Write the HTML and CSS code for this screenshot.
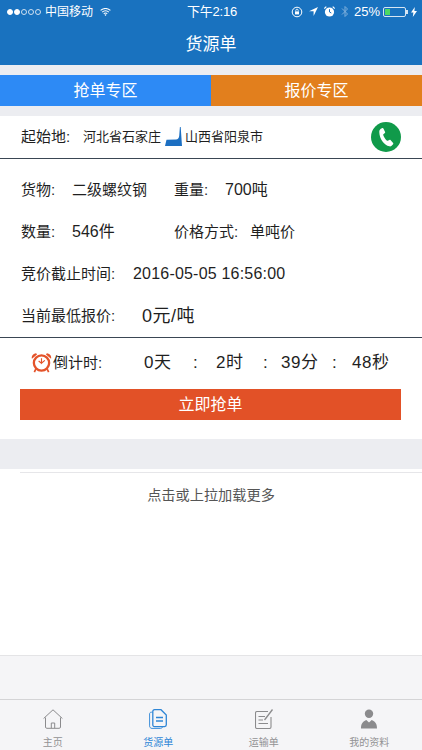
FILE: index.html
```html
<!DOCTYPE html>
<html lang="zh-CN">
<head>
<meta charset="utf-8">
<title>货源单</title>
<link rel="stylesheet" href="styles.css">
</head>
<body>
<div class="app">
  <header class="header">
    <div class="status">
      <div class="status-left">
        <span class="signal"><i class="dot on"></i><i class="dot on"></i><i class="dot"></i><i class="dot"></i><i class="dot"></i></span>
        <span class="carrier">中国移动</span>
        <svg class="wifi" width="11" height="8" viewBox="0 0 12 9"><path d="M.5 2.800a7.800 7.800 0 0 1 11 0M2.300 4.700a5.200 5.200 0 0 1 7.400 0M4 6.400a2.800 2.800 0 0 1 4 0" fill="none" stroke="#fff" stroke-width="1.200"/><path d="M6 9 4.800 7.600a1.700 1.700 0 0 1 2.400 0z" fill="#fff"/></svg>
      </div>
      <div class="time">下午2:16</div>
      <div class="status-right">
        <svg width="12" height="12" viewBox="0 0 12 12"><circle cx="6" cy="6" r="4.800" fill="none" stroke="#fff" stroke-width="1"/><rect x="4" y="5.400" width="4" height="3" fill="#fff"/><path d="M4.800 5.400V4.400a1.200 1.200 0 0 1 2.400 0v1" fill="none" stroke="#fff" stroke-width=".8"/></svg>
        <svg class="gap-a" width="9" height="9" viewBox="0 0 9 9"><path d="M9 0 0 4.200h4.600V9z" fill="#fff"/></svg>
        <svg class="gap-a" width="11" height="11" viewBox="0 0 11 11"><circle cx="5.500" cy="6" r="4.600" fill="#fff"/><path d="M5.500 3.200V6l1.800 1" fill="none" stroke="#1972bf" stroke-width="1"/><path d="M.3 2.500 2.300.6M10.700 2.500 8.700.6" stroke="#fff" stroke-width="1.200"/></svg>
        <svg class="gap-b" width="8" height="13" viewBox="0 0 8 13"><path d="M1 3.500 6.500 9 4 11.500v-10L6.500 4 1 9.500" fill="none" stroke="#7fb0dc" stroke-width="1"/></svg>
        <span class="percent">25%</span>
        <span class="battery"><span class="battery-fill"></span></span>
        <span class="battery-nub"></span>
        <svg class="bolt" width="6" height="10" viewBox="0 0 6 10"><path d="M3.800 0 0 5.600h2.400L1.800 10 6 3.900H3.400z" fill="#fff"/></svg>
      </div>
    </div>
    <h1 class="title">货源单</h1>
  </header>

  <nav class="zones">
    <div class="zone zone-blue">抢单专区</div>
    <div class="zone zone-orange">报价专区</div>
  </nav>

  <main class="card">
    <div class="route">
      <span class="route-label">起始地:</span>
      <span class="route-place">河北省石家庄</span>
      <svg class="route-icon" width="17" height="19" viewBox="0 0 17 19"><path d="M0 19 1.500 12.800 11 12.400C13 12.300 13.800 11.500 14.200 9L14.900 0H15.700L17 19z" fill="#1c6fc2"/></svg>
      <span class="route-place">山西省阳泉市</span>
      <svg class="phone" width="30" height="30" viewBox="0 0 30 30"><circle cx="15" cy="15" r="15" fill="#109a4a"/><path d="M9.400 6.900 11.300 6c.5-.2.900 0 1.100.4l1.700 3.600c.2.400.1.800-.2 1.100l-1.500 1.200c-.2.200-.3.400-.2.700.7 2.200 2 4.200 3.800 5.700.2.200.5.200.7.1l1.700-.9c.4-.2.800-.1 1.100.2l2.600 3c.3.300.3.800 0 1.100l-1.500 1.500c-.6.600-1.400.8-2.200.6-5.500-1.500-10-7.600-10.100-14.400 0-.9.400-2.200 1.100-2.600z" fill="#fff"/></svg>
    </div>

    <div class="details">
      <div class="line">
        <div class="cell cell-first"><span class="label">货物:</span><span class="value">二级螺纹钢</span></div>
        <div class="cell"><span class="label">重量:</span><span class="value num">700吨</span></div>
      </div>
      <div class="line">
        <div class="cell cell-first"><span class="label">数量:</span><span class="value num">546件</span></div>
        <div class="cell"><span class="label label-tight">价格方式:</span><span class="value">单吨价</span></div>
      </div>
      <div class="line">
        <span class="label label-wide">竞价截止时间:</span><span class="value num date">2016-05-05 16:56:00</span>
      </div>
      <div class="line">
        <span class="label label-wider">当前最低报价:</span><span class="price">0元/吨</span>
      </div>
    </div>

    <div class="countdown">
      <svg class="clock" width="21" height="21" viewBox="0 0 22 22">
        <path d="M1 7.200C.2 4.500 2 1.500 5.400 1.200L6.300 2.700zM21 7.200C21.800 4.500 20 1.500 16.600 1.200L15.700 2.700z" fill="#e4532a"/>
        <circle cx="11" cy="11.500" r="8" fill="#fff" stroke="#e4532a" stroke-width="2.400"/>
        <path d="M11 6.500V11.800L14.500 8.800M11 11.800 8 9.500" fill="none" stroke="#e4532a" stroke-width="1.200"/>
        <path d="M5 18 3.500 21M17 18 18.500 21" stroke="#e4532a" stroke-width="1.800"/>
      </svg>
      <span class="count-label">倒计时:</span>
      <span class="count-val">0天</span><span class="count-sep">:</span>
      <span class="count-val">2时</span><span class="count-sep">:</span>
      <span class="count-val">39分</span><span class="count-sep">:</span>
      <span class="count-val">48秒</span>
    </div>

    <div class="action"><button class="grab">立即抢单</button></div>
  </main>

  <div class="divider"></div>

  <section class="more">
    <div class="more-text">点击或上拉加载更多</div>
  </section>

  <div class="band"></div>

  <footer class="tabs">
    <div class="tab">
      <svg width="20" height="20" viewBox="0 0 20 20"><path d="M.6 9.500 10 .8l9.400 8.700M2.500 8.500v9.500c0 .8.500 1.300 1.300 1.300h12.400c.8 0 1.300-.5 1.300-1.300V8.500M8.300 19.200v-5.200h3.400v5.200" fill="none" stroke="#8b8b8d" stroke-width="1"/></svg>
      <span>主页</span>
    </div>
    <div class="tab tab-on">
      <svg width="18" height="20" viewBox="0 0 18 20"><path d="M3.500 3.200H2.300C1.200 3.200.6 3.900.6 5v11.900c0 1.400.9 2.500 2.400 2.500h8.600c1.100 0 1.700-.6 1.700-1.400" fill="none" stroke="#3d8fd9" stroke-width="1"/><path d="M5.500.7H12l5.300 5.300v9.800c0 1.100-.7 1.800-1.700 1.800H5.500c-1 0-1.700-.7-1.700-1.800V2.500C3.800 1.400 4.500.7 5.500.7z" fill="none" stroke="#2f86d6" stroke-width="1.300"/><path d="M7 8.500h7M7 12h7" stroke="#2f86d6" stroke-width="1.300"/></svg>
      <span>货源单</span>
    </div>
    <div class="tab">
      <svg width="18" height="20" viewBox="0 0 18 20"><path d="M13 2.500H2C1 2.500.5 3 .5 4v14c0 1 .5 1.500 1.500 1.500h12.500c1 0 1.500-.5 1.500-1.500V8" fill="none" stroke="#8b8b8d" stroke-width="1.100"/><path d="M3.500 7.500H10M3.500 11H8M3.500 14.500H13" stroke="#8b8b8d" stroke-width="1.100"/><path d="M9.500 11 17.500.5" stroke="#8b8b8d" stroke-width="1.300"/></svg>
      <span>运输单</span>
    </div>
    <div class="tab">
      <svg width="16" height="20" viewBox="0 0 16 20"><circle cx="8" cy="4.700" r="4.200" fill="#8b8b8d"/><path d="M0 19.500c0-4 1-6.500 5.300-8.500L8 13.500 10.700 11C15 13 16 15.500 16 19.500z" fill="#8b8b8d"/></svg>
      <span>我的资料</span>
    </div>
  </footer>
</div>
</body>
</html>
```

FILE: styles.css
```css
* { box-sizing: border-box; }
html, body { margin: 0; padding: 0; }
body {
  width: 422px;
  height: 750px;
  overflow: hidden;
  background: #ecedf1;
  font-family: "Liberation Sans", "Noto Sans CJK SC", sans-serif;
  color: #1f1f1f;
}
.app { display: flex; flex-direction: column; height: 750px; }

.header { height: 65px; background: #1972bf; color: #fff; flex: none; }
.status {
  height: 21px;
  display: grid;
  grid-template-columns: 1fr auto 1fr;
  align-items: center;
  padding: 2px 5px 0 7px;
  font-size: 12px;
  line-height: 16px;
}
.status-left, .status-right { display: flex; align-items: center; }
.status-right { justify-content: flex-end; }
.signal { display: flex; gap: 1px; margin-right: 4px; }
.dot { width: 6px; height: 6px; border-radius: 50%; border: 1px solid #cfe0f1; }
.dot.on { background: #fff; border-color: #fff; }
.wifi { margin-left: 7px; }
.time { font-size: 13px; letter-spacing: -.2px; }
.gap-a { margin-left: 6px; }
.gap-b { margin-left: 6px; }
.percent { margin-left: 5px; font-size: 13px; }
.battery {
  width: 23px; height: 10px; margin-left: 3px;
  border: 1px solid #d6e5f3; border-radius: 2px; padding: 1px;
  display: flex;
}
.battery-fill { width: 5px; background: #4cd964; }
.battery-nub { width: 2px; height: 4px; background: #d6e5f3; margin-right: 3px; }
.title {
  margin: 0; height: 44px; line-height: 40px; padding-top: 4px;
  text-align: center; font-size: 17px; font-weight: 400;
}

.zones { display: flex; margin: 10px 0; height: 31px; flex: none; }
.zone {
  flex: 1; text-align: center; color: #fff;
  font-size: 16px; line-height: 32px;
}
.zone-blue { background: #2d8af5; }
.zone-orange { background: #e27f1d; }

.card { background: #fff; flex: none; }
.route {
  height: 43px;
  display: flex; align-items: center;
  padding: 0 21px;
  line-height: 20px;
  border-bottom: 1px solid #3a4653;
}
.route-label { font-size: 15px; width: 62px; flex: none; }
.route-place { font-size: 13px; }
.route-icon { margin: 0 3px 2px 4px; flex: none; }
.phone { margin-left: auto; flex: none; }

.details { padding: 10px 21px 0; border-bottom: 1px solid #3a4653; height: 179px; }
.line { height: 42px; display: flex; align-items: center; font-size: 15px; line-height: 20px; }
.cell { display: flex; align-items: center; }
.cell-first { width: 153px; flex: none; }
.label { width: 51px; flex: none; }
.label-tight { width: 76px; }
.label-wide { width: 112px; }
.label-wider { width: 121px; }
.num { font-size: 16px; }
.date { letter-spacing: .2px; }
.price { font-size: 18px; letter-spacing: .5px; }

.countdown {
  height: 51px;
  display: grid;
  grid-template-columns: 23px 91px 49px 23px 47px 18px 51px 20px auto;
  align-items: center;
  padding: 0 0 2px 30px;
  line-height: 22px;
}
.clock { display: block; margin-left: 1px; }
.count-label { font-size: 15px; }
.count-val { font-size: 17px; letter-spacing: .5px; }
.count-sep { font-size: 17px; }

.action { padding: 0 21px 19px 20px; }
.grab {
  display: block; width: 100%; height: 31px;
  border: 0; border-radius: 0; padding: 0; margin: 0;
  background: #e25127; color: #fff;
  font: inherit; font-size: 16px; line-height: 31px;
}

.divider { height: 30px; flex: none; }

.more { background: #fff; flex: 1; padding: 3px 0 0 20px; }
.more-text {
  border-top: 1px solid #e6e6e9;
  height: 46px; line-height: 44px;
  padding-right: 20px;
  text-align: center; font-size: 14.2px; color: #555;
}

.band { height: 44px; flex: none; background: #f5f5f7; border-top: 1px solid #e4e4e6; }

.tabs {
  height: 51px; flex: none;
  display: grid; grid-template-columns: repeat(4, 1fr);
  background: #f5f5f7;
  border-top: 1px solid #d4d4d6;
}
.tab {
  display: flex; flex-direction: column; align-items: center;
  padding-top: 9px;
  font-size: 10px; color: #929294;
}
.tab svg { display: block; height: 20px; margin-bottom: 7px; flex: none; }
.tab span { line-height: 14px; }
.tab-on { color: #2f86d6; }
```
